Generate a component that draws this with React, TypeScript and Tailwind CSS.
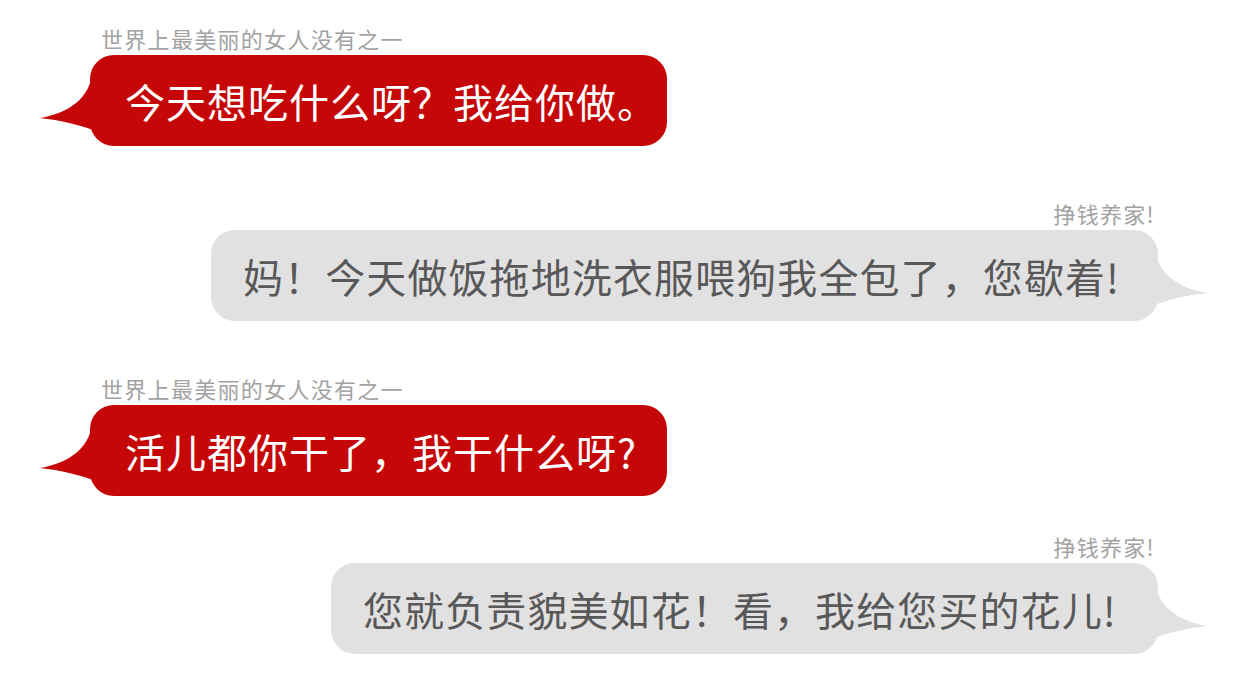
import React from "react";

const RED = "bg-[#c50707]";

function LeftTail() {
    return (
        <svg className="absolute left-[-50px] top-[18px]" width="62" height="64" viewBox="0 0 62 64">
            <path d="M52 0 C50 24 30 40 0 45 C20 47 40 52 62 60 L62 0 Z" fill="#c50707" />
        </svg>
    );
}

function RightTail() {
    return (
        <svg className="absolute right-[-49px] top-[18px]" width="62" height="64" viewBox="0 0 62 64">
            <path d="M10 0 C12 24 32 40 62 45 C42 47 22 52 0 60 L0 0 Z" fill="#e2e1e2" />
        </svg>
    );
}

function Her({ text }: { text: string }) {
    return (
        <div className="flex flex-col items-start pl-[90px]">
            {/* name */}
            <div className="h-[26px] pl-[11px] text-[22px] leading-[26px] tracking-[1.3px] text-[#a2a2a2] mb-[4px]">
                世界上最美丽的女人没有之一
            </div>
            <div className={`relative h-[91px] w-[577px] rounded-[24px] ${RED} flex items-center pl-[35px]`}>
                <LeftTail />
                <span className="relative text-[40px] leading-none text-white tracking-[1px]">{text}</span>
            </div>
        </div>
    );
}

function Me({ text, width }: { text: string; width: string }) {
    return (
        <div className="flex flex-col items-end pr-[84px]">
            <div className="h-[26px] pr-[3px] text-[22px] leading-[26px] tracking-[1.3px] text-[#a2a2a2] mb-[4px]">
                挣钱养家!
            </div>
            <div className={`relative h-[91px] ${width} rounded-[24px] bg-[#e2e1e2] flex items-center pl-[32px]`}>
                <RightTail />
                <span className="relative text-[40px] leading-none text-[#585858] tracking-[1.1px]">{text}</span>
            </div>
        </div>
    );
}

export default function App() {
    return (
        <div
            className="w-[1242px] h-[685px] bg-white overflow-hidden flex flex-col pt-[25px]"
            style={{ fontFamily: '"Noto Sans CJK SC", "Noto Sans", sans-serif' }}
        >
            <Her text="今天想吃什么呀？我给你做。" />
            <div className="mt-[54px]">
                <Me text="妈！今天做饭拖地洗衣服喂狗我全包了，您歇着!" width="w-[947px]" />
            </div>
            <div className="mt-[54px]">
                <Her text="活儿都你干了，我干什么呀?" />
            </div>
            <div className="mt-[37px]">
                <Me text="您就负责貌美如花！看，我给您买的花儿!" width="w-[827px]" />
            </div>
        </div>
    );
}
